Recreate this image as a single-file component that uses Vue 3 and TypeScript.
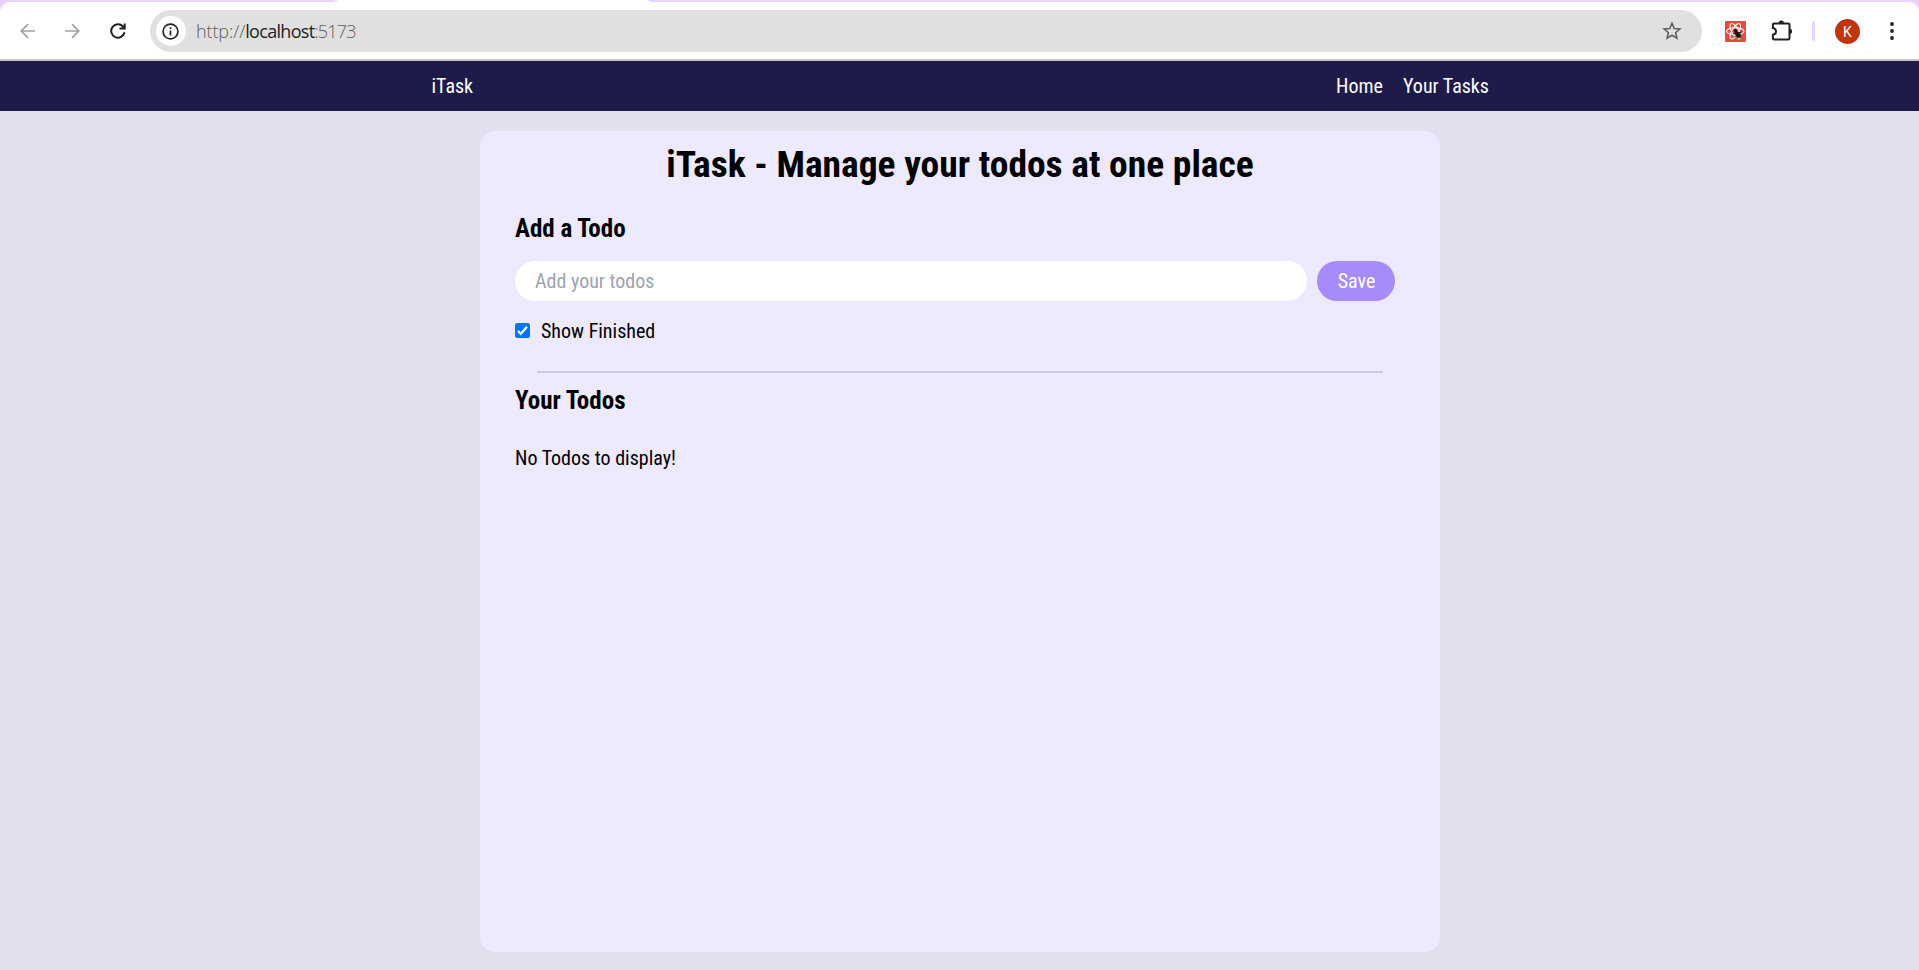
<script setup lang="ts">
import { ref } from 'vue'

interface Todo {
  id: number
  text: string
}

const draft = ref('')
const showFinished = ref(true)
const todos = ref<Todo[]>([])

function save(): void {
  const text = draft.value.trim()
  if (!text) return
  todos.value.push({ id: Date.now(), text })
  draft.value = ''
}
</script>

<template>
  <div class="window">
    <header class="browser">
      <div class="tabstrip"><span class="active-tab"></span></div>
      <div class="toolbar">
        <svg class="nav-icon back" viewBox="0 0 16 16"><path d="M15 8H1.5M8 1.2 1.2 8 8 14.8" /></svg>
        <svg class="nav-icon forward" viewBox="0 0 16 16"><path d="M0 8h13.500M7 1.200 13.800 8 7 14.800" /></svg>
        <svg class="nav-icon reload" viewBox="0 0 16 16"><path d="M14.500 9.300A6.700 6.700 0 1 1 12.800 3.300L14.500 5M14.700.5V5.500H9.500" /></svg>
        <div class="address">
          <span class="info">
            <svg width="17" height="17" viewBox="0 0 17 17">
              <circle cx="8.500" cy="8.500" r="7.400" fill="none" stroke="#202124" stroke-width="1.700" />
              <path d="M8.500 7.500v5M8.500 4.300v1.700" stroke="#202124" stroke-width="1.700" />
            </svg>
          </span>
          <span class="url"><span class="scheme">http://</span><b>localhost</b><span class="port">:5173</span></span>
          <svg class="star" width="20" height="20" viewBox="0 0 20 20">
            <path d="M10 2.300 12.200 7.500 17.900 8 13.600 11.700 14.900 17.200 10 14.300 5.100 17.200 6.400 11.700 2.100 8 7.800 7.500Z" />
          </svg>
        </div>
        <svg class="extension" width="21" height="21" viewBox="0 0 21 21">
          <rect width="21" height="21" rx="1" fill="#e44c3c" />
          <g fill="none" stroke="#fff" stroke-width="1.050">
            <ellipse cx="10.300" cy="10.300" rx="8.700" ry="3.500" />
            <ellipse cx="10.300" cy="10.300" rx="8.700" ry="3.500" transform="rotate(60 10.300 10.300)" />
            <ellipse cx="10.300" cy="10.300" rx="8.700" ry="3.500" transform="rotate(120 10.300 10.300)" />
          </g>
          <ellipse cx="12.500" cy="13.300" rx="2.100" ry="3.700" transform="rotate(-42 12.500 13.300)" fill="#151515" />
          <circle cx="10.500" cy="9.600" r="1.700" fill="#151515" />
          <path d="m8 13 9-2M9.500 16l7-1M12 18l1.500-7M15.200 17.500v-6" stroke="#151515" stroke-width=".9" />
        </svg>
        <svg class="puzzle" width="22" height="22" viewBox="0 0 22 22">
          <path d="M3.800 3.400H17.200a1.300 1.300 0 0 1 1.300 1.300V18.200a1.300 1.300 0 0 1-1.300 1.300H3.200a1.300 1.300 0 0 1-1.300-1.300V14.800C6 14.300 6 8.700 1.900 8.100V4.700a1.300 1.300 0 0 1 1.300-1.300Z" fill="none" stroke="#202124" stroke-width="2" />
          <path d="M7.600 3.300a2.700 2.700 0 0 1 5.400 0ZM18.500 8.700a2.600 2.600 0 0 1 0 5.200Z" fill="#202124" />
        </svg>
        <span class="divider"></span>
        <span class="avatar">K</span>
        <svg class="menu" width="4" height="18" viewBox="0 0 4 18" fill="#202124">
          <circle cx="2" cy="2" r="1.900" /><circle cx="2" cy="9" r="1.900" /><circle cx="2" cy="16" r="1.900" />
        </svg>
      </div>
    </header>

    <nav class="navbar">
      <span class="brand">iTask</span>
      <ul class="links">
        <li>Home</li>
        <li>Your Tasks</li>
      </ul>
    </nav>

    <main class="card">
      <h1>iTask - Manage your todos at one place</h1>
      <h2 class="add-heading">Add a Todo</h2>
      <form class="entry" @submit.prevent="save">
        <input v-model="draft" class="field" type="text" placeholder="Add your todos" />
        <button class="save" type="submit">Save</button>
      </form>
      <label class="filter">
        <input v-model="showFinished" class="native" type="checkbox" />
        <span class="box">
          <svg v-if="showFinished" viewBox="0 0 15 15"><path d="m3 7.900 2.800 2.900L12 3.700" /></svg>
        </span>
        <span>Show Finished</span>
      </label>
      <div class="rule"></div>
      <h2>Your Todos</h2>
      <p v-if="todos.length === 0" class="empty">No Todos to display!</p>
      <p v-for="todo in todos" :key="todo.id" class="empty">{{ todo.text }}</p>
    </main>
  </div>
</template>

<style>
body {
  background: #e2dfee;
}
</style>

<style scoped>
.window {
  height: 970px;
  overflow: hidden;
  background: #e2dfee;
  color: #000;
  font-family: "Roboto Condensed", Roboto, sans-serif;
  font-stretch: 75%;
  font-size: 20px;
  line-height: 30px;
}
.browser {
  box-sizing: border-box;
  height: 61px;
  background: #e9d2ff;
  border-bottom: 2px solid #c7c7c7;
}
.tabstrip {
  height: 2px;
  display: flex;
  padding-left: 333px;
}
.active-tab {
  width: 319px;
  background: #fff;
  clip-path: polygon(6px 0, 313px 0, 319px 2px, 0 2px);
}
.toolbar {
  box-sizing: border-box;
  height: 57px;
  padding: 8px 24px 7px 20px;
  display: flex;
  align-items: center;
  background: #fff;
  border-radius: 10px 10px 0 0;
}
.toolbar > * {
  flex-shrink: 0;
}
.nav-icon {
  width: 16px;
  height: 16px;
  fill: none;
  stroke: #a0a0a0;
  stroke-width: 1.7;
  margin-top: -1px;
}
.forward {
  margin-left: 29px;
}
.reload {
  margin-left: 28.5px;
  stroke: #202124;
  stroke-width: 2;
}
.address {
  box-sizing: border-box;
  width: 1552px;
  height: 42px;
  margin-left: 24.5px;
  padding: 0 20px 0 6px;
  display: flex;
  align-items: center;
  border-radius: 21px;
  background: #e0e0e0;
}
.info {
  width: 30px;
  height: 30px;
  display: grid;
  place-items: center;
  border-radius: 50%;
  background: #fff;
}
.info svg {
  margin-right: 1px;
}
.url {
  margin-left: 10px;
  font-family: "Open Sans", sans-serif;
  font-stretch: normal;
  font-weight: 350;
  font-size: 18px;
  color: #5f6060;
}
.scheme {
  letter-spacing: -0.1px;
}
.url b {
  font-weight: 400;
  letter-spacing: -0.7px;
  color: #202124;
}
.port {
  letter-spacing: -0.8px;
}
.star {
  margin-left: auto;
  fill: none;
  stroke: #5f6060;
  stroke-width: 1.6;
}
.extension {
  margin-left: 23px;
}
.puzzle {
  margin-left: 25px;
}
.divider {
  width: 3px;
  height: 20px;
  margin-left: 19px;
  border-radius: 2px;
  background: #e9d2ff;
}
.avatar {
  width: 25px;
  height: 25px;
  margin-left: 20px;
  border-radius: 50%;
  background: #bf360c;
  color: #fff;
  font: 400 14px/26px Roboto, sans-serif;
  text-align: center;
}
.menu {
  margin-left: 30px;
}
.navbar {
  height: 50px;
  padding: 0 430px 0 431.5px;
  display: flex;
  align-items: center;
  justify-content: space-between;
  background: #1e1b4b;
  color: #fff;
  font-weight: 430;
}
.links {
  display: flex;
  gap: 20px;
  margin: 0;
  padding: 0;
  list-style: none;
}
.card {
  box-sizing: border-box;
  width: 960px;
  height: 821px;
  margin: 20px auto 0 480px;
  padding: 11px 35px 10px;
  border-radius: 15px;
  background: #ede9fe;
}
h1 {
  margin: 0;
  font-size: 37.5px;
  line-height: 45px;
  font-weight: 700;
  text-align: center;
}
h2 {
  margin: 0;
  font-size: 25px;
  line-height: 35px;
  font-weight: 700;
}
.add-heading {
  margin-top: 24px;
}
.entry {
  display: flex;
  gap: 10px;
  margin-top: 15px;
}
.field,
.save {
  box-sizing: border-box;
  height: 40px;
  padding: 0 20px;
  border: 0;
  border-radius: 20px;
  font: inherit;
}
.field {
  width: 792px;
  background: #fff;
}
.field::placeholder {
  color: #9ca3af;
  opacity: 1;
}
.save {
  width: 78px;
  padding: 0 0 0 1px;
  background: #a78bfa;
  color: #fff;
  font-weight: 430;
}
.filter {
  display: flex;
  align-items: center;
  height: 30px;
  margin-top: 15px;
}
.native {
  position: absolute;
  opacity: 0;
}
.box {
  width: 15px;
  height: 15px;
  margin: -2px 11px 0 0;
  border-radius: 2.5px;
  background: #0075ff;
}
.box svg {
  display: block;
  fill: none;
  stroke: #fff;
  stroke-width: 2.2;
}
.rule {
  width: 846px;
  height: 2px;
  margin: 25px 0 10px 22px;
  background: #cdc9de;
}
.empty {
  margin: 25px 0 0;
}
</style>
